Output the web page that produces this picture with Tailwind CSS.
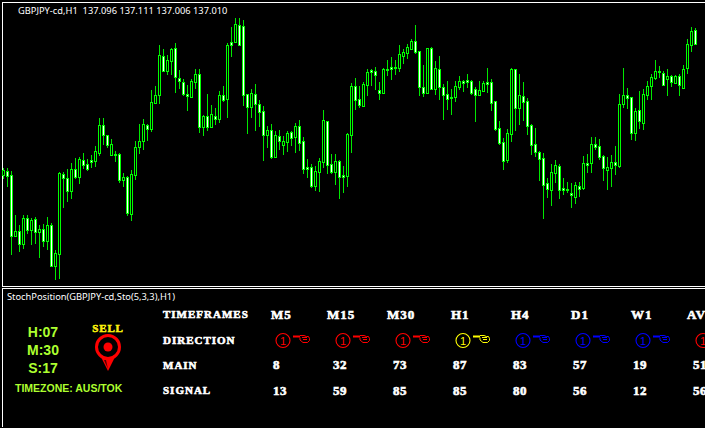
<!DOCTYPE html>
<html lang="en">
<head>
  <meta charset="UTF-8" />
  <title>GBPJPY-cd,H1</title>
  <script src="https://cdn.jsdelivr.net/npm/@tailwindcss/browser@4"></script>
</head>
<body class="bg-black text-white w-[705px] h-[428px] overflow-hidden font-['Noto_Sans',sans-serif]">

  <!-- price chart -->
  <section class="relative h-[287px] pt-[2px] pl-[2px]">
    <div class="h-full border-l border-t border-b border-white"></div>
    <svg id="chart" class="absolute top-0 left-0" width="705" height="287" shape-rendering="crispEdges"></svg>
    <p class="absolute top-[4px] left-[18px] text-[9.3px] leading-[14px] whitespace-pre">GBPJPY-cd,H1  137.096 137.111 137.006 137.010</p>
  </section>

  <!-- indicator window -->
  <section class="relative h-[139px] w-[703px] overflow-hidden mt-[1px] ml-[2px] border-l border-t border-white">
    <p class="pt-[1px] pl-[4px] text-[9.3px] leading-[14px]">StochPosition(GBPJPY-cd,Sto(5,3,3),H1)</p>

    <div class="flex mt-[13px]">
      <div class="w-[160px] shrink-0">
        <div class="flex">
          <div class="w-[80px] pt-[6px] text-center font-['Liberation_Sans',sans-serif] font-bold text-[14px] leading-[18px] text-[#adff2f]">
            <p>H:07</p>
            <p>M:30</p>
            <p>S:17</p>
          </div>
          <div class="ml-[9px] w-[32px] pt-[5px] flex flex-col items-center">
            <p class="font-['Liberation_Serif',serif] font-bold text-[11px] leading-[12px] tracking-[0.8px] text-yellow-300 [-webkit-text-stroke:0.5px_#ffff00]">SELL</p>
            <svg class="-mt-[1px]" width="30" height="40" viewBox="0 0 30 40">
              <path d="M8 24 L15 38 L22 24 Z" fill="#ff0000" />
              <path d="M11 27 L15 36 L13 27 Z" fill="#500000" />
              <circle cx="15" cy="14" r="11.5" fill="#000" stroke="#ff0000" stroke-width="3" />
              <circle cx="15" cy="14" r="4.5" fill="#ff0000" />
            </svg>
          </div>
        </div>
        <p class="ml-[12px] mt-[4px] font-['Liberation_Sans',sans-serif] text-[10.5px] leading-[14px] font-bold text-[#adff2f] whitespace-nowrap">TIMEZONE: AUS/TOK</p>
      </div>

      <div id="table" class="grid grid-cols-[108px_repeat(8,60px)] auto-rows-[25.3px] -mt-[15px] items-center font-['Liberation_Serif',serif] font-bold text-[11px] [-webkit-text-stroke:0.6px_#ffffff] whitespace-nowrap">
        <span class="tracking-[1px]">TIMEFRAMES</span>
        <span class="text-[13px] tracking-[1px]">M5</span>
        <span class="text-[13px] tracking-[1px] -ml-[4px]">M15</span>
        <span class="text-[13px] tracking-[1px] -ml-[4px]">M30</span>
        <span class="text-[13px] tracking-[1px]">H1</span>
        <span class="text-[13px] tracking-[1px]">H4</span>
        <span class="text-[13px] tracking-[1px]">D1</span>
        <span class="text-[13px] tracking-[1px]">W1</span>
        <span class="text-[13px] tracking-[1px] -ml-[4px]">AVG</span>

        <span class="tracking-[1px]">DIRECTION</span>
        <svg class="ml-[4px]" width="40" height="18" viewBox="0 0 40 18"><use href="#sig" class="text-[#ff0000]" /></svg>
        <svg class="ml-[4px]" width="40" height="18" viewBox="0 0 40 18"><use href="#sig" class="text-[#ff0000]" /></svg>
        <svg class="ml-[4px]" width="40" height="18" viewBox="0 0 40 18"><use href="#sig" class="text-[#ff0000]" /></svg>
        <svg class="ml-[4px]" width="40" height="18" viewBox="0 0 40 18"><use href="#sig" class="text-[#ffff00]" /></svg>
        <svg class="ml-[4px]" width="40" height="18" viewBox="0 0 40 18"><use href="#sig" class="text-[#0000ff]" /></svg>
        <svg class="ml-[4px]" width="40" height="18" viewBox="0 0 40 18"><use href="#sig" class="text-[#0000ff]" /></svg>
        <svg class="ml-[4px]" width="40" height="18" viewBox="0 0 40 18"><use href="#sig" class="text-[#0000ff]" /></svg>
        <svg class="ml-[4px]" width="40" height="18" viewBox="0 0 40 18"><use href="#sig" class="text-[#ff0000]" /></svg>

        <span class="tracking-[1px]">MAIN</span>
        <span class="pl-[2px] text-[13px] tracking-[0.6px]">8</span>
        <span class="pl-[2px] text-[13px] tracking-[0.6px]">32</span>
        <span class="pl-[2px] text-[13px] tracking-[0.6px]">73</span>
        <span class="pl-[2px] text-[13px] tracking-[0.6px]">87</span>
        <span class="pl-[2px] text-[13px] tracking-[0.6px]">83</span>
        <span class="pl-[2px] text-[13px] tracking-[0.6px]">57</span>
        <span class="pl-[2px] text-[13px] tracking-[0.6px]">19</span>
        <span class="pl-[2px] text-[13px] tracking-[0.6px]">51</span>

        <span class="tracking-[1px]">SIGNAL</span>
        <span class="pl-[2px] text-[13px] tracking-[0.6px]">13</span>
        <span class="pl-[2px] text-[13px] tracking-[0.6px]">59</span>
        <span class="pl-[2px] text-[13px] tracking-[0.6px]">85</span>
        <span class="pl-[2px] text-[13px] tracking-[0.6px]">85</span>
        <span class="pl-[2px] text-[13px] tracking-[0.6px]">80</span>
        <span class="pl-[2px] text-[13px] tracking-[0.6px]">56</span>
        <span class="pl-[2px] text-[13px] tracking-[0.6px]">12</span>
        <span class="pl-[2px] text-[13px] tracking-[0.6px]">56</span>
      </div>
    </div>
  </section>

  <!-- circled number + pointing hand, shared by the direction row -->
  <svg width="0" height="0" class="absolute">
    <defs>
      <g id="sig" fill="currentColor">
        <circle cx="8" cy="9.5" r="7" fill="none" stroke="currentColor" stroke-width="1.1" />
        <text x="8" y="13.5" text-anchor="middle" class="font-['Liberation_Sans',sans-serif] font-normal text-[11px] [-webkit-text-stroke:0]">1</text>
        <path d="M18 4.5h7v2h-7z" />
        <path d="M25 4.5h4l2.5 1h2l1 2v2l-2 2h-4.5l-3-2.5v-2.5" fill="none" stroke="currentColor" stroke-width="1" />
        <path d="M27 6.5h5M28 8.5h4" fill="none" stroke="currentColor" stroke-width="1" />
      </g>
    </defs>
  </svg>

  <script>
    // [high, bodyTop, bodyBottom, low, filled] per bar, x = 3 + 4 * index
    const bars = [
      [168,170,175,178,0],[168,171,176,186,1],[171,175,236,254,1],[215,231,236,236,0],[225,231,244,251,1],[215,218,244,248,0],
      [215,218,230,233,1],[218,220,230,244,0],[217,219,232,243,1],[225,229,232,257,0],[224,229,241,246,1],[217,225,241,249,0],
      [223,225,266,266,1],[250,253,266,279,0],[172,173,254,278,0],[172,174,178,207,1],[169,178,191,201,1],[163,169,191,198,0],
      [158,169,177,178,1],[157,159,177,183,0],[153,160,165,168,1],[159,164,169,170,1],[155,160,162,167,1],[146,151,161,166,0],
      [118,125,153,155,0],[118,125,135,144,1],[135,135,145,147,1],[139,144,155,155,0],[151,154,155,161,1],[153,154,180,182,1],
      [173,177,180,186,0],[176,177,213,215,1],[170,174,214,220,0],[141,147,175,179,0],[124,141,147,153,0],[119,124,141,149,0],
      [124,125,129,140,1],[90,102,129,131,0],[86,95,103,103,0],[45,55,95,103,0],[49,56,71,71,1],[55,60,71,74,0],
      [48,49,61,74,0],[43,48,77,92,1],[70,78,81,88,1],[79,82,94,95,1],[85,94,96,110,1],[79,81,97,97,0],
      [69,74,82,88,0],[69,74,127,132,1],[115,116,127,135,0],[94,116,127,130,1],[105,114,127,127,0],[108,116,119,124,1],
      [91,95,119,122,0],[86,95,100,101,1],[43,45,99,117,0],[27,42,45,56,1],[18,24,42,42,0],[18,25,45,45,1],
      [20,26,95,105,1],[94,94,107,133,1],[89,93,107,117,0],[84,94,104,130,1],[100,104,112,126,1],[106,111,135,160,1],
      [126,130,135,147,0],[124,130,157,158,1],[131,135,157,157,0],[130,136,141,149,1],[136,141,145,154,0],[131,133,142,151,0],
      [131,132,138,145,1],[123,126,137,152,0],[120,126,143,150,1],[137,141,169,173,1],[159,167,169,177,1],[164,167,186,187,1],
      [166,171,186,190,0],[158,161,172,191,0],[110,120,162,167,0],[121,121,165,173,1],[154,164,172,173,1],[154,161,172,184,0],
      [160,161,177,198,1],[166,175,177,192,1],[133,134,176,186,0],[83,86,135,152,0],[78,86,100,109,1],[86,99,105,107,1],
      [82,84,106,106,0],[69,72,85,95,0],[69,70,72,85,1],[67,71,75,89,1],[82,90,93,99,1],[68,69,93,93,0],
      [60,69,70,75,1],[57,67,69,79,1],[60,67,68,74,1],[45,54,68,71,0],[49,52,56,63,0],[44,47,53,58,0],
      [39,41,49,49,0],[25,41,52,53,1],[51,51,87,95,1],[65,87,93,96,1],[48,48,93,93,0],[47,48,89,89,1],
      [61,68,89,94,0],[56,69,87,99,1],[84,87,95,119,1],[81,94,99,109,1],[89,97,98,114,1],[81,86,97,101,0],
      [76,81,87,89,0],[80,81,83,91,1],[74,80,82,87,1],[80,81,93,94,1],[87,89,95,121,1],[81,90,95,95,0],
      [81,83,91,91,0],[68,82,84,92,1],[79,82,103,110,1],[101,101,129,130,1],[121,128,143,144,1],[138,142,161,169,1],
      [129,133,160,162,0],[68,69,134,141,0],[69,69,108,130,1],[74,95,108,124,0],[82,96,102,120,1],[98,101,126,134,1],
      [124,125,145,154,1],[128,144,152,156,1],[151,152,159,180,1],[153,158,185,218,1],[178,183,189,197,1],[164,172,190,205,0],
      [160,165,173,182,0],[164,166,190,198,1],[178,188,190,194,1],[182,189,190,192,1],[183,193,195,207,1],[182,185,197,203,0],
      [182,186,189,196,1],[156,163,188,189,0],[154,163,165,172,1],[137,144,163,172,0],[137,144,147,149,1],[139,146,157,159,1],
      [155,156,168,180,1],[157,167,170,189,0],[155,162,168,186,0],[146,162,165,174,1],[94,104,166,167,0],[68,95,104,107,0],
      [88,95,98,108,1],[97,97,133,139,1],[108,111,133,140,0],[91,110,121,128,1],[89,94,123,129,0],[81,86,95,99,0],
      [74,77,86,99,0],[60,71,78,79,0],[66,71,72,77,1],[71,73,85,85,1],[69,76,79,95,0],[75,76,82,86,1],
      [75,76,83,83,0],[74,76,85,95,1],[65,69,88,88,0],[39,44,68,73,0],[27,31,45,51,0],[28,30,44,44,1]
    ];

    let out = "";
    bars.forEach(([high, top, bottom, low, filled], i) => {
      const x = 3 + 4 * i;
      out += `<rect x="${x}" y="${high}" width="1" height="${low - high + 1}" fill="#00e800"/>`;
      out += `<rect x="${x - 1}" y="${top}" width="3" height="${bottom - top + 1}" fill="#00ff00"/>`;
      if (bottom - top > 1) {
        out += `<rect x="${x}" y="${top + 1}" width="1" height="${bottom - top - 1}" fill="${filled ? "#ffffff" : "#000000"}"/>`;
      }
    });
    document.getElementById("chart").innerHTML = out;
  </script>
</body>
</html>
